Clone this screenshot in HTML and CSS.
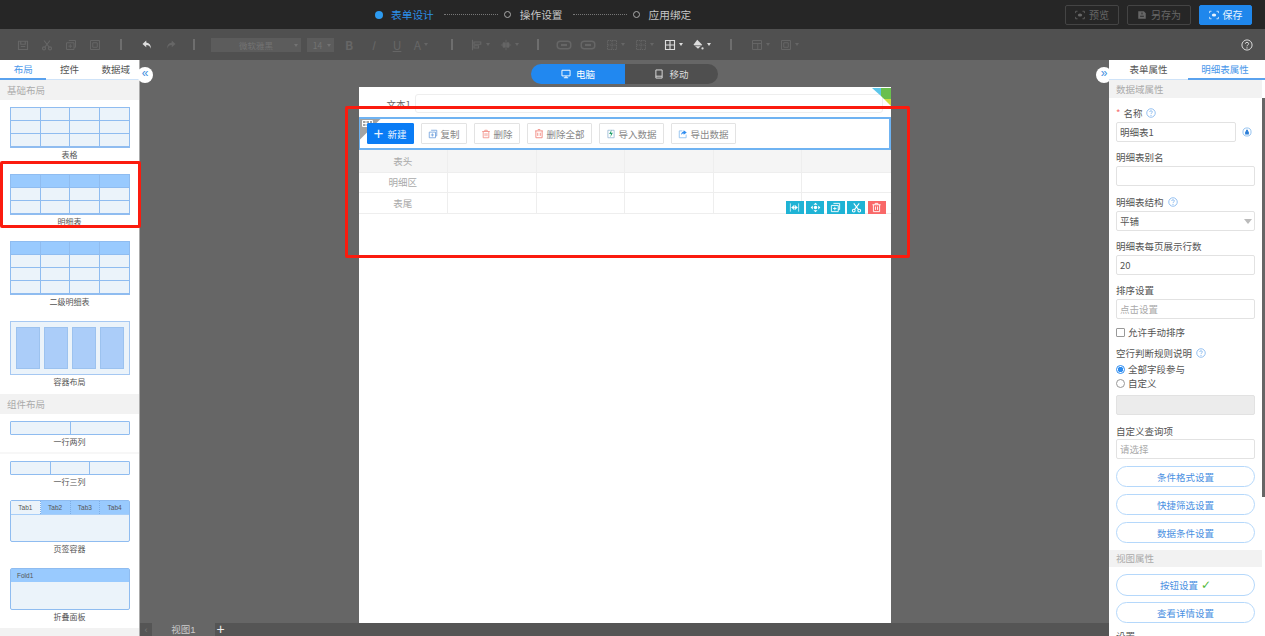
FILE: index.html

```html
<!doctype html>
<html>
    <head>
        <meta charset="utf-8">
        <title>表单设计</title>
        <link rel="stylesheet" href="styles.css">
    </head>
    <body>
        <svg class="defs" xmlns="http://www.w3.org/2000/svg">
            <symbol id="i-grid" viewBox="0 0 16 16"><path d="M2 2h12v12H2zM2 8h12M8 2v12" fill="none" stroke="currentColor" stroke-width="1.5"/></symbol>
            <symbol id="i-flag" viewBox="0 0 11 7" preserveAspectRatio="none"><path d="M.5.5h10v6H.500zM.5 3.500h10M4 .5v6M7.500 .5v6" fill="none" stroke="currentColor"/></symbol>
            <symbol id="i-save" viewBox="0 0 16 16"><path d="M2 3h12v11H2zM5 3v4h6V3M5 10h6" fill="none" stroke="currentColor" stroke-width="1.5"/></symbol>
            <symbol id="i-scissors" viewBox="0 0 16 16"><path d="M4 2l7 9M12 2l-7 9" fill="none" stroke="currentColor" stroke-width="1.5"/><circle cx="4" cy="12.5" r="2" fill="none" stroke="currentColor" stroke-width="1.5"/><circle cx="12" cy="12.5" r="2" fill="none" stroke="currentColor" stroke-width="1.5"/></symbol>
            <symbol id="i-copy" viewBox="0 0 16 16"><path d="M5 2h9v9h-2M2 5h10v9H2zM7 7v5M4.500 9.500h5" fill="none" stroke="currentColor" stroke-width="1.300"/></symbol>
            <symbol id="i-trash" viewBox="0 0 16 16"><path d="M2 4h12M6 4V2h4v2M3.500 4v10h9V4M6.500 6.500v5M9.500 6.500v5" fill="none" stroke="currentColor" stroke-width="1.300"/></symbol>
            <symbol id="i-trash-all" viewBox="0 0 16 16"><path d="M2 3h12M3 3v11h10V3M6 6v5M10 6v5M6 1h4" fill="none" stroke="currentColor" stroke-width="1.500"/></symbol>
            <symbol id="i-undo" viewBox="0 0 16 16"><path d="M7 2L2 6.500 7 11V8c3 0 5 1 6 5 .5-5-1.500-8-6-8.500z" fill="currentColor"/></symbol>
            <symbol id="i-redo" viewBox="0 0 16 16"><path d="M9 2l5 4.500L9 11V8c-3 0-5 1-6 5-.5-5 1.500-8 6-8.500z" fill="currentColor"/></symbol>
            <symbol id="i-align" viewBox="0 0 16 16"><path d="M2 1v14M4 4h9v3H4zM4 9h6v3H4z" fill="none" stroke="currentColor" stroke-width="1.500"/></symbol>
            <symbol id="i-valign" viewBox="0 0 16 16"><path d="M8 1v14M1 8h3M12 8h3M4 5h3v6H4zM9 5h3v6H9z" fill="currentColor" stroke="currentColor"/></symbol>
            <symbol id="i-merge" viewBox="0 0 20 16"><rect x="1" y="3" width="18" height="10" rx="4" fill="none" stroke="currentColor" stroke-width="2"/><path d="M6 8h8" stroke="currentColor" stroke-width="3"/></symbol>
            <symbol id="i-dashgrid" viewBox="0 0 16 16"><path d="M2 2h12v12H2zM2 8h12M8 2v12" fill="none" stroke="currentColor" stroke-width="1.300" stroke-dasharray="2 1"/></symbol>
            <symbol id="i-fill" viewBox="0 0 16 16"><path d="M7 1l6.500 6.500L8 13 2 7.500z" fill="currentColor"/><path d="M3 9h9" stroke="#505050"/><circle cx="14" cy="12.500" r="1.500" fill="currentColor"/></symbol>
            <symbol id="i-panel" viewBox="0 0 16 16"><path d="M2 2h12v12H2zM2 6h12M9 6v8" fill="none" stroke="currentColor" stroke-width="1.300"/></symbol>
            <symbol id="i-frame" viewBox="0 0 16 16"><path d="M2 2h12v12H2zM5 5h6v6H5z" fill="none" stroke="currentColor" stroke-width="1.300"/></symbol>
            <symbol id="i-help" viewBox="0 0 16 16"><circle cx="8" cy="8" r="6.800" fill="none" stroke="currentColor" stroke-width="1.300"/><path d="M5.800 6.300C5.800 3.800 10.200 3.800 10.200 6.300 10.200 8 8 7.800 8 9.800" fill="none" stroke="currentColor" stroke-width="1.300"/><circle cx="8" cy="11.900" r=".9" fill="currentColor"/></symbol>
            <symbol id="i-eye" viewBox="0 0 16 16"><path d="M1 5V2h3M12 2h3v3M15 11v3h-3M4 14H1v-3" fill="none" stroke="currentColor" stroke-width="1.300"/><ellipse cx="8" cy="8" rx="3.500" ry="2.500" fill="currentColor"/></symbol>
            <symbol id="i-saveas" viewBox="0 0 16 16"><path d="M2 2h9l3 3v9H2z" fill="currentColor"/><path d="M5 10h6M8 4v3" stroke="#262626" stroke-width="1.500"/></symbol>
            <symbol id="i-desktop" viewBox="0 0 16 16"><path d="M1.500 2h13v9h-13zM8 11v3M4.500 14h7" fill="none" stroke="currentColor" stroke-width="1.500"/></symbol>
            <symbol id="i-phone" viewBox="0 0 16 16"><path d="M3 1.500h10v13H3zM3 11.500h10" fill="none" stroke="currentColor" stroke-width="1.500"/></symbol>
            <symbol id="i-import" viewBox="0 0 16 16"><path d="M3 2h10v12H3z" fill="none" stroke="#99b9d6" stroke-width="1.300"/><path d="M9 1L5 8h3l-1 5 4-7H8z" fill="#22a06b"/></symbol>
            <symbol id="i-export" viewBox="0 0 16 16"><path d="M7 3H2v11h11V9" fill="none" stroke="#8fc0ef" stroke-width="1.400"/><path d="M9 2l5 3.500L9 9V7C7 7 5.500 8 5 10c0-3.500 1.500-5.500 4-6z" fill="#2d8cf0"/></symbol>
            <symbol id="i-width" viewBox="0 0 16 16"><path d="M2 2v12M14 2v12M4 8h8M4 8l3-3v6zM12 8l-3-3v6z" fill="#fff" stroke="#fff"/></symbol>
            <symbol id="i-move" viewBox="0 0 16 16"><path d="M8 1l3 3H5zM8 15l-3-3h6zM1 8l3-3v6zM15 8l-3 3V5z" fill="#fff"/><circle cx="8" cy="8" r="2.500" fill="#fff"/></symbol>
        </svg>

        <div class="topbar">
            <div class="steps">
                <span class="step-dot"></span>
                <span class="step-name step-active">表单设计</span>
                <span class="step-line"></span>
                <span class="step-ring"></span>
                <span class="step-name">操作设置</span>
                <span class="step-line"></span>
                <span class="step-ring"></span>
                <span class="step-name">应用绑定</span>
            </div>
            <div class="top-actions">
                <div class="top-btn btn-preview"><svg class="ic11"><use href="#i-eye"/></svg>预览</div>
                <div class="top-btn btn-saveas"><svg class="ic11"><use href="#i-saveas"/></svg>另存为</div>
                <div class="top-btn btn-save"><svg class="ic11"><use href="#i-eye"/></svg>保存</div>
            </div>
        </div>

        <div class="toolbar">
            <span class="tb w24"><svg class="ic12"><use href="#i-save"/></svg></span>
            <span class="tb w24"><svg class="ic12"><use href="#i-scissors"/></svg></span>
            <span class="tb w24"><svg class="ic12"><use href="#i-copy"/></svg></span>
            <span class="tb w24"><svg class="ic12"><use href="#i-frame"/></svg></span>
            <span class="tb-sep sep-1"></span>
            <span class="tb w24 tb-on"><svg class="ic12"><use href="#i-undo"/></svg></span>
            <span class="tb w24"><svg class="ic12"><use href="#i-redo"/></svg></span>
            <span class="tb-sep sep-2"></span>
            <span class="tb-select select-font">微软雅黑<i class="caret"></i></span>
            <span class="tb-select select-size">14<i class="caret"></i></span>
            <span class="tb w24 tb-b">B</span>
            <span class="tb w24 tb-i">I</span>
            <span class="tb w24 tb-u">U</span>
            <span class="tb w24 tb-a">A<i class="caret"></i></span>
            <span class="tb-sep sep-3"></span>
            <span class="tb w29"><svg class="ic12"><use href="#i-align"/></svg><i class="caret"></i></span>
            <span class="tb w29"><svg class="ic12"><use href="#i-valign"/></svg><i class="caret"></i></span>
            <span class="tb-sep sep-4"></span>
            <span class="tb w24"><svg class="ic-wide"><use href="#i-merge"/></svg></span>
            <span class="tb w24"><svg class="ic-wide"><use href="#i-merge"/></svg></span>
            <span class="tb w30"><svg class="ic12"><use href="#i-dashgrid"/></svg><i class="caret"></i></span>
            <span class="tb w28"><svg class="ic12"><use href="#i-dashgrid"/></svg><i class="caret"></i></span>
            <span class="tb w30 tb-on"><svg class="ic12"><use href="#i-grid"/></svg><i class="caret"></i></span>
            <span class="tb w27 tb-on"><svg class="ic12"><use href="#i-fill"/></svg><i class="caret"></i></span>
            <span class="tb-sep sep-5"></span>
            <span class="tb w30"><svg class="ic12"><use href="#i-panel"/></svg><i class="caret"></i></span>
            <span class="tb w28"><svg class="ic12"><use href="#i-frame"/></svg><i class="caret"></i></span>
            <span class="tb-help"><svg class="ic12"><use href="#i-help"/></svg></span>
        </div>

        <div class="main">
            <div class="left-panel">
                <div class="tabs">
                    <div class="tab tab-active">布局</div>
                    <div class="tab">控件</div>
                    <div class="tab">数据域</div>
                </div>
                <div class="section-title">基础布局</div>

                <div class="item">
                    <div class="thumb thumb-table">
                        <i></i><i></i><i></i><i></i><i></i><i></i><i></i><i></i><i></i><i></i><i></i><i></i>
                    </div>
                    <div class="item-name">表格</div>
                </div>
                <div class="item">
                    <div class="thumb thumb-table thumb-head">
                        <i></i><i></i><i></i><i></i><i></i><i></i><i></i><i></i><i></i><i></i><i></i><i></i>
                    </div>
                    <div class="item-name">明细表</div>
                </div>
                <div class="item item-tall">
                    <div class="thumb thumb-table thumb-head thumb-4rows">
                        <i></i><i></i><i></i><i></i><i></i><i></i><i></i><i></i><i></i><i></i><i></i><i></i><i></i><i></i><i></i><i></i>
                    </div>
                    <div class="item-name">二级明细表</div>
                </div>
                <div class="item item-tall">
                    <div class="thumb thumb-box">
                        <i></i><i></i><i></i><i></i>
                    </div>
                    <div class="item-name">容器布局</div>
                </div>

                <div class="section-title">组件布局</div>
                <div class="item item-rule">
                    <div class="thumb thumb-row thumb-2col"><i></i><i></i></div>
                    <div class="item-name">一行两列</div>
                </div>
                <div class="item item-short">
                    <div class="thumb thumb-row thumb-3col"><i></i><i></i><i></i></div>
                    <div class="item-name">一行三列</div>
                </div>
                <div class="item item-panel">
                    <div class="thumb thumb-tabs">
                        <div class="mini-tabs">
                            <span class="mini-first">Tab1</span><span>Tab2</span><span>Tab3</span><span>Tab4</span>
                        </div>
                    </div>
                    <div class="item-name">页签容器</div>
                </div>
                <div class="item item-panel">
                    <div class="thumb thumb-tabs">
                        <div class="mini-fold">Fold1</div>
                    </div>
                    <div class="item-name">折叠面板</div>
                </div>
                <div class="section-title"></div>
            </div>

            <div class="canvas">
                <div class="collapse collapse-left">«</div>
                <div class="collapse collapse-right">»</div>

                <div class="switch">
                    <div class="switch-item switch-on"><svg class="ic10"><use href="#i-desktop"/></svg>电脑</div>
                    <div class="switch-item"><svg class="ic10"><use href="#i-phone"/></svg>移动</div>
                </div>

                <div class="page">
                    <svg class="corner" viewBox="0 0 19 18">
                        <polygon points="0,0 9,0 9,8" fill="#5cc6ea"/>
                        <polygon points="9,0 19,0 19,11 12,11 9,8" fill="#69bf4e"/>
                        <polygon points="12,11 19,11 19,18" fill="#cddc3f"/>
                    </svg>
                    <div class="field-row">
                        <span class="field-name">文本1</span>
                        <span class="field-input"></span>
                    </div>

                    <div class="detail-bar">
                        <div class="bar-flag"><svg class="flag-icon"><use href="#i-flag"/></svg></div>
                        <div class="bar-btn bar-new"><span class="plus">+</span>新建</div>
                        <div class="bar-btn"><svg class="ic10 c-blue"><use href="#i-copy"/></svg>复制</div>
                        <div class="bar-btn"><svg class="ic10 c-red"><use href="#i-trash"/></svg>删除</div>
                        <div class="bar-btn"><svg class="ic10 c-red"><use href="#i-trash-all"/></svg>删除全部</div>
                        <div class="bar-btn"><svg class="ic10"><use href="#i-import"/></svg>导入数据</div>
                        <div class="bar-btn"><svg class="ic10"><use href="#i-export"/></svg>导出数据</div>
                    </div>

                    <div class="detail-wrap">
                        <table class="detail-table">
                            <tr class="row-head"><td>表头</td><td></td><td></td><td></td><td></td><td></td></tr>
                            <tr><td>明细区</td><td></td><td></td><td></td><td></td><td></td></tr>
                            <tr><td>表尾</td><td></td><td></td><td></td><td></td><td></td></tr>
                        </table>
                        <div class="row-tools">
                            <span class="tool"><svg class="ic11-tool"><use href="#i-width"/></svg></span>
                            <span class="tool"><svg class="ic11-tool"><use href="#i-move"/></svg></span>
                            <span class="tool"><svg class="ic11-tool"><use href="#i-copy"/></svg></span>
                            <span class="tool"><svg class="ic11-tool"><use href="#i-scissors"/></svg></span>
                            <span class="tool tool-del"><svg class="ic11-tool"><use href="#i-trash"/></svg></span>
                        </div>
                    </div>
                </div>

                <div class="sheet-tabs">
                    <span class="sheet-prev">‹</span>
                    <span class="sheet-tab">视图1</span>
                    <span class="sheet-add">+</span>
                </div>
            </div>

            <div class="right-panel">
                <div class="scroll-thumb"></div>
                <div class="tabs">
                    <div class="tab">表单属性</div>
                    <div class="tab tab-active">明细表属性</div>
                </div>
                <div class="prop-title">数据域属性</div>
                <div class="props">
                    <div class="prop prop-first">
                        <div class="prop-label"><span class="req">*</span>名称<svg class="ic10 c-help"><use href="#i-help"/></svg></div>
                        <div class="name-row">
                            <div class="input input-name">明细表1</div>
                            <svg class="lock" viewBox="0 0 16 16"><circle cx="8" cy="8" r="6.500" fill="none" stroke="#8fc0ef" stroke-width="1.500"/><path d="M5 7h6v5H5zM6.500 7V4.500h3V7" fill="#2d7fd8"/></svg>
                        </div>
                    </div>
                    <div class="prop">
                        <div class="prop-label">明细表别名</div>
                        <div class="input"></div>
                    </div>
                    <div class="prop prop-tall">
                        <div class="prop-label label-tall">明细表结构<svg class="ic10 c-help"><use href="#i-help"/></svg></div>
                        <div class="input input-select">平铺<i class="select-arrow"></i></div>
                    </div>
                    <div class="prop">
                        <div class="prop-label">明细表每页展示行数</div>
                        <div class="input">20</div>
                    </div>
                    <div class="prop prop-sort">
                        <div class="prop-label">排序设置</div>
                        <div class="input input-hint">点击设置</div>
                    </div>
                    <div class="check-row"><span class="checkbox"></span>允许手动排序</div>
                    <div class="prop-label label-empty">空行判断规则说明<svg class="ic10 c-help"><use href="#i-help"/></svg></div>
                    <div class="radio-row"><span class="radio radio-on"></span>全部字段参与</div>
                    <div class="radio-row"><span class="radio"></span>自定义</div>
                    <div class="input input-disabled"></div>
                    <div class="prop-label label-query">自定义查询项</div>
                    <div class="input input-hint">请选择</div>
                    <div class="pill pill-first">条件格式设置</div>
                    <div class="pill">快捷筛选设置</div>
                    <div class="pill">数据条件设置</div>
                </div>
                <div class="prop-title prop-title-view">视图属性</div>
                <div class="props">
                    <div class="pill pill-first pill-tall">按钮设置<span class="tick">✓</span></div>
                    <div class="pill pill-view">查看详情设置</div>
                    <div class="prop-label label-last">设置</div>
                </div>
            </div>
        </div>

        <div class="mark mark-item"></div>
        <div class="mark mark-detail"></div>
    </body>
</html>
```

FILE: styles.css

```css
* {
    box-sizing: border-box;
}

html,
body {
    margin: 0;
    height: 636px;
    overflow: hidden;
}

body {
    position: relative;
    font-family: "Noto Sans CJK SC", "Liberation Sans", sans-serif;
    font-size: 9.5px;
    color: #555;
    background: #666;
}

.defs {
    display: none;
}

svg {
    flex: none;
}

.ic9 {
    width: 9px;
    height: 9px;
}

.ic10 {
    width: 10px;
    height: 10px;
}

.ic11 {
    width: 10px;
    height: 10px;
    margin-right: 4px;
}

.ic11-tool {
    width: 11px;
    height: 11px;
}

.ic12 {
    width: 12px;
    height: 12px;
}

.ic-wide {
    width: 16px;
    height: 12px;
}

.c-blue {
    color: #6f9fdc;
}

.c-red {
    color: #f28b82;
}

.c-help {
    color: #7db3ee;
    margin-left: 4px;
}

/* top bar */
.topbar {
    display: flex;
    align-items: center;
    height: 29px;
    padding-left: 375px;
    background: #262626;
}

.steps {
    display: flex;
    align-items: center;
    font-size: 10.7px;
    color: #c8c8c8;
}

.step-dot {
    width: 8px;
    height: 8px;
    border-radius: 50%;
    background: #2d9bf0;
    margin-right: 8px;
}

.step-ring {
    width: 7px;
    height: 7px;
    border-radius: 50%;
    border: 1px solid #aaa;
    margin-right: 9px;
}

.step-active {
    color: #2d8fe8;
}

.step-line {
    width: 54px;
    margin: 0 6px 0 10px;
    border-top: 1px dotted #777;
}

.top-actions {
    display: flex;
    gap: 8px;
    margin-left: auto;
    margin-right: 13px;
}

.top-btn {
    display: flex;
    align-items: center;
    justify-content: center;
    height: 20px;
    border: 1px solid #444;
    border-radius: 2px;
    color: #666;
    font-size: 10px;
}

.btn-preview {
    width: 54px;
}

.btn-saveas {
    width: 64px;
}

.btn-save {
    width: 53px;
    background: #1f87ec;
    border-color: #1f87ec;
    color: #e8f3fd;
}

/* format toolbar */
.toolbar {
    display: flex;
    align-items: center;
    height: 31px;
    padding-left: 11px;
    background: #505050;
    color: #666;
}

.tb {
    display: flex;
    align-items: center;
    justify-content: center;
    height: 16px;
    font-size: 12px;
}

.w24 {
    width: 24px;
}

.w27 {
    width: 27px;
}

.w28 {
    width: 28px;
}

.w29 {
    width: 29px;
}

.w30 {
    width: 30px;
}

.tb-on {
    color: #ddd;
}

.tb-b {
    font-weight: bold;
}

.tb-i {
    font-style: italic;
}

.tb-u {
    text-decoration: underline;
}

.caret {
    display: inline-block;
    margin-left: 3px;
    border-left: 2.500px solid transparent;
    border-right: 2.500px solid transparent;
    border-top: 3px solid currentColor;
}

.tb-sep {
    width: 2px;
    height: 11px;
    background: #6e6e6e;
}

.sep-1 {
    margin: 0 13px;
}

.sep-2 {
    margin: 0 16px 0 10px;
}

.sep-3 {
    margin: 0 13px 0 18px;
}

.sep-4 {
    margin: 0 13px;
}

.sep-5 {
    margin: 0 13px 0 15px;
}

.tb-select {
    display: flex;
    align-items: center;
    justify-content: center;
    position: relative;
    height: 14px;
    background: #5c5c5c;
    color: #737373;
    font-size: 8.500px;
}

.tb-select .caret {
    position: absolute;
    right: 3px;
    top: 6px;
}

.select-font {
    width: 90px;
    margin-right: 6px;
}

.select-size {
    width: 27px;
    margin-right: 3px;
    padding-right: 6px;
}

.tb-help {
    display: flex;
    margin-left: auto;
    margin-right: 12px;
    color: #ddd;
}

/* main area */
.main {
    display: flex;
    height: 576px;
}

.left-panel {
    width: 140px;
    height: 576px;
    overflow: hidden;
    background: #fff;
    border-right: 1px solid #aaa;
}

.tabs {
    display: flex;
    height: 20px;
    border-bottom: 1px solid #cfe3f8;
    background: #fff;
}

.tab {
    flex: 1;
    text-align: center;
    line-height: 18px;
    color: #555;
}

.tab-active {
    color: #4a97ea;
    height: 20px;
    border-bottom: 2px solid #5aa2ee;
}

.section-title {
    height: 20px;
    padding-left: 7px;
    line-height: 20px;
    background: #f2f2f2;
    color: #aaa;
}

.item {
    height: 67px;
    padding: 7px 10px 0;
}

.item-tall {
    height: 80px;
}

.item-rule {
    height: 40px;
    border-bottom: 2px solid #f7f7f7;
}

.item-short {
    height: 39px;
}

.item-panel {
    height: 67.500px;
}

.thumb {
    width: 120px;
    border: 1px solid #8fbcf0;
    background: #ebf3fa;
}

.thumb i {
    display: block;
}

.thumb-table {
    display: grid;
    grid-template-columns: repeat(4, 1fr);
    grid-auto-rows: 13px;
    height: 41px;
}

.thumb-table i {
    border-right: 1px solid #8fbcf0;
    border-bottom: 1px solid #8fbcf0;
}

.thumb-table i:nth-child(4n) {
    border-right: 0;
}

.thumb-head i:nth-child(-n+4) {
    background: #99cafe;
}

.thumb-4rows {
    height: 54px;
}

.thumb-box {
    display: flex;
    gap: 4px;
    height: 54px;
    padding: 5px;
    background: #ebf3fa;
    border-color: #a6c8f2;
}

.thumb-box i {
    flex: 1;
    background: #abcdf9;
    border: 1px solid #9cc2ef;
}

.thumb-row {
    display: flex;
    height: 14px;
    border-radius: 1px;
}

.thumb-row i {
    flex: 1;
    border-right: 1px solid #8fbcf0;
}

.thumb-row i:last-child {
    border-right: 0;
}

.thumb-tabs {
    height: 42px;
    border-radius: 2px;
}

.mini-tabs {
    display: flex;
    height: 13px;
    background: #99cafe;
    font-size: 6.500px;
    line-height: 13px;
    text-align: center;
    border-bottom: 1px solid #a8cef8;
    box-sizing: content-box;
    font-family: "Liberation Sans", sans-serif;
    color: #555;
}

.mini-tabs span {
    flex: 1;
    border-right: 1px dotted #7eaee6;
}

.mini-tabs span:last-child {
    border-right: 0;
}

.mini-first {
    background: #ebf3fa;
}

.mini-fold {
    height: 13px;
    padding-left: 6px;
    background: #99cafe;
    font-size: 6.500px;
    line-height: 13px;
    font-family: "Liberation Sans", sans-serif;
    color: #555;
}

.item-name {
    height: 14px;
    text-align: center;
    line-height: 14px;
    font-size: 8px;
    color: #555;
}

/* canvas */
.canvas {
    position: relative;
    flex: 1;
    display: flex;
    flex-direction: column;
    align-items: center;
    min-width: 0;
    background: #666;
}

.collapse {
    position: absolute;
    top: 7px;
    width: 16px;
    height: 16px;
    border-radius: 50%;
    background: #fff;
    color: #3f8fe0;
    font-size: 12px;
    line-height: 13px;
    text-align: center;
    font-family: "Liberation Sans", sans-serif;
}

.collapse-left {
    left: -3px;
}

.collapse-right {
    right: -3px;
}

.switch {
    display: flex;
    height: 20px;
    margin-top: 4px;
    border-radius: 10px;
    overflow: hidden;
}

.switch-item {
    display: flex;
    align-items: center;
    justify-content: center;
    gap: 5px;
    width: 93px;
    background: #4f4f4f;
    color: #ddd;
}

.switch-on {
    width: 94px;
    background: #2188f0;
    color: #fff;
}

.page {
    position: relative;
    flex: none;
    width: 532px;
    height: 536px;
    margin-top: 3px;
    background: #fff;
}

.corner {
    position: absolute;
    top: 1px;
    right: 0;
    width: 19px;
    height: 18px;
}

.field-row {
    display: flex;
    align-items: center;
    height: 19px;
    margin-top: 7px;
    padding-left: 28px;
    color: #666;
}

.field-name {
    width: 28px;
}

.field-input {
    width: 468px;
    height: 19px;
    border: 1px solid #eee;
    border-radius: 3px;
}

.detail-bar {
    position: relative;
    display: flex;
    align-items: center;
    gap: 7px;
    height: 33px;
    margin-top: 4px;
    padding-left: 7px;
    border: 2px solid #6fb3f2;
    border-left-width: 1px;
}

.bar-flag {
    position: absolute;
    left: 0;
    top: 0;
    width: 21px;
    height: 21px;
}

.bar-flag::before {
    content: "";
    position: absolute;
    inset: 0;
    background: #a3a3a3;
    clip-path: polygon(0 0, 100% 0, 0 100%);
}

.flag-icon {
    position: absolute;
    left: 2px;
    top: 1px;
    width: 11px;
    height: 7px;
    color: #fff;
}

.bar-btn {
    position: relative;
    display: flex;
    align-items: center;
    justify-content: center;
    gap: 3px;
    height: 21px;
    padding: 0 6px;
    border: 1px solid #e3e3e3;
    border-radius: 1px;
    background: #fff;
    color: #888;
}

.bar-new {
    width: 47px;
    padding: 0;
    background: #0a7cf5;
    border-color: #0a7cf5;
    color: #e8f2fe;
}

.plus {
    font-family: "Liberation Sans", sans-serif;
    font-size: 17px;
    line-height: 17px;
    margin-right: 1px;
}

.detail-wrap {
    position: relative;
}

.detail-table {
    width: 532px;
    table-layout: fixed;
    border-collapse: collapse;
    color: #aaa;
}

.detail-table td {
    height: 20.500px;
    padding: 0;
    border-right: 1px solid #eee;
    border-bottom: 1px solid #eee;
    text-align: center;
    line-height: 14px;
}

.detail-table td:first-child {
    width: 89px;
}

.detail-table td:last-child {
    border-right: 0;
}

.row-head td {
    height: 22px;
    background: #f5f5f5;
}

.row-tools {
    position: absolute;
    top: 51px;
    right: 5px;
    display: flex;
    gap: 2.500px;
}

.tool {
    display: flex;
    align-items: center;
    justify-content: center;
    width: 18px;
    height: 13px;
    background: #1fb3d5;
    color: #fff;
}

.tool-del {
    background: #f96868;
}

.sheet-tabs {
    display: flex;
    align-self: stretch;
    height: 13px;
    margin-top: auto;
    background: #555;
    color: #ccc;
    font-family: "Liberation Sans", "Noto Sans CJK SC", sans-serif;
    line-height: 13px;
}

.sheet-prev {
    width: 12px;
    text-align: center;
    color: #777;
}

.sheet-tab {
    width: 63px;
    text-align: center;
    background: #666;
}

.sheet-add {
    width: 11px;
    text-align: center;
    color: #eee;
    font-size: 14px;
}

/* right panel */
.right-panel {
    position: relative;
    width: 156px;
    height: 576px;
    overflow: hidden;
    background: #fff;
}

.scroll-thumb {
    position: absolute;
    top: 38px;
    right: 0;
    width: 3px;
    height: 399px;
    background: #666;
}

.right-panel .tab:first-child {
    flex: 0 0 79px;
}

.right-panel .tab-active {
    padding-right: 3px;
}

.prop-title {
    height: 18px;
    margin-right: 3px;
    padding-left: 7px;
    background: #f2f2f2;
    color: #aaa;
    line-height: 18px;
}

.prop-title-view {
    height: 17px;
    margin-top: 7px;
    line-height: 17px;
}

.props {
    padding: 0 10px 0 7px;
}

.prop {
    height: 44px;
}

.prop-first {
    margin-top: 8px;
}

.prop-tall {
    height: 45px;
}

.prop-sort {
    height: 42px;
}

.prop-label {
    display: flex;
    align-items: center;
    height: 14px;
    margin-bottom: 2px;
    line-height: 14px;
    color: #555;
}

.label-tall {
    height: 15px;
}

.label-empty {
    margin-top: 7px;
}

.label-query {
    margin-top: 9px;
    margin-bottom: 1px;
}

.label-last {
    margin-top: 6px;
}

.req {
    color: #f56c6c;
    margin-right: 3px;
}

.name-row {
    display: flex;
    align-items: center;
}

.lock {
    width: 10px;
    height: 10px;
    margin-left: 6px;
}

.input {
    position: relative;
    height: 20px;
    padding-left: 3px;
    border: 1px solid #e2e2e2;
    border-radius: 2px;
    line-height: 18px;
    color: #555;
    background: #fff;
}

.input-name {
    flex: none;
    width: 120px;
}

.input-hint {
    color: #aaa;
}

.input-disabled {
    margin-top: 5px;
    background: #ececec;
}

.select-arrow {
    position: absolute;
    right: 2px;
    top: 7px;
    border-left: 4px solid transparent;
    border-right: 4px solid transparent;
    border-top: 5px solid #bbb;
}

.check-row,
.radio-row {
    display: flex;
    align-items: center;
    height: 14px;
    color: #555;
}

.checkbox {
    width: 9px;
    height: 9px;
    margin-right: 3px;
    border: 1px solid #999;
    border-radius: 1px;
}

.radio {
    width: 9px;
    height: 9px;
    margin-right: 3px;
    border: 1px solid #999;
    border-radius: 50%;
}

.radio-on {
    border-color: #2d8cf0;
    background: radial-gradient(circle, #2d8cf0 0 2.500px, #fff 3px);
}

.pill {
    display: flex;
    align-items: center;
    justify-content: center;
    height: 21px;
    margin-top: 7px;
    border: 1px solid #b5d8fb;
    border-radius: 11px;
    color: #4a90e2;
}

.pill-tall {
    height: 22px;
}

.pill-view {
    margin-top: 6px;
}

.tick {
    margin-left: 3px;
    color: #52b83a;
    font-family: "DejaVu Sans", sans-serif;
    font-size: 12px;
}

/* red marks over the screenshot */
.mark {
    position: absolute;
    border: 3px solid #fb1b0e;
    border-radius: 2px;
    pointer-events: none;
}

.mark-item {
    left: 0;
    top: 161px;
    width: 141px;
    height: 67px;
}

.mark-detail {
    left: 345px;
    top: 106px;
    width: 565px;
    height: 152px;
}
```
